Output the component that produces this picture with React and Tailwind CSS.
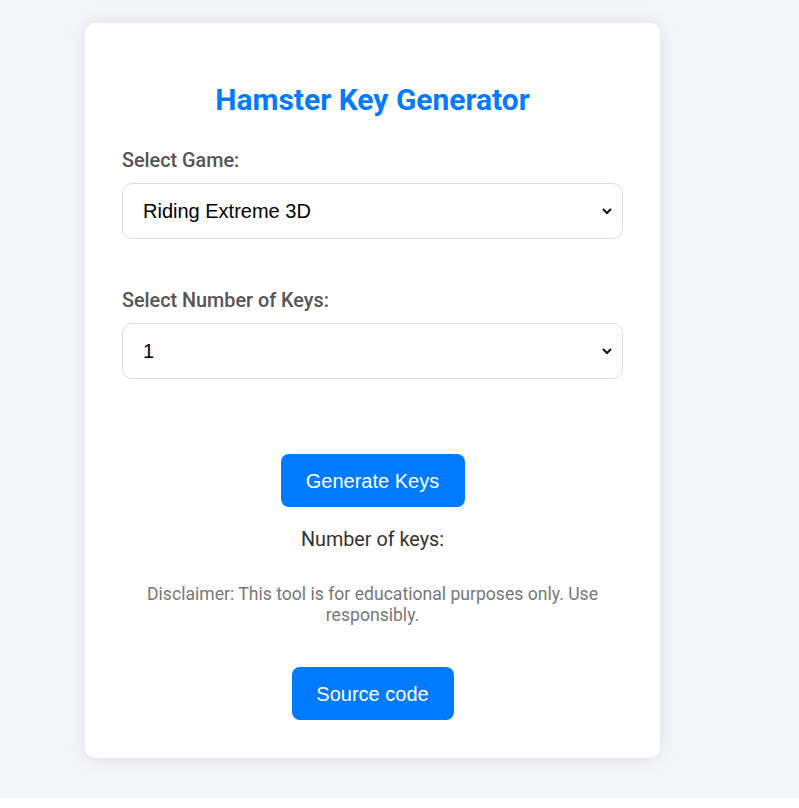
import { useState } from "react";

const games = ["Riding Extreme 3D", "Chain Cube 2048", "My Clone Army", "Train Miner", "Merge Away", "Twerk Race 3D"];
const counts = [1, 2, 3, 4];

const Chevron = () => (
  <svg
    className="pointer-events-none absolute top-1/2 right-[11px] -translate-y-1/2"
    width="10"
    height="7"
    viewBox="0 0 10 7"
    fill="none"
  >
    <path d="M1 1.5L5 5.5L9 1.5" stroke="#111" strokeWidth="2" />
  </svg>
);

const Select = ({ value, onChange, children }) => (
  <div className="relative mt-[11px]">
    <select
      value={value}
      onChange={onChange}
      className="block h-[56px] w-full appearance-none rounded-[10px] border border-[#ddd] bg-white pr-[30px] pl-[20px] font-['Liberation_Sans',Arial,sans-serif] text-[20px] text-black"
    >
      {children}
    </select>
    <Chevron />
  </div>
);

const App = () => {
  const [game, setGame] = useState(games[0]);
  const [count, setCount] = useState(1);

  return (
    <div className="bg-[#f4f6f9] pt-[23px] pb-[40px] pl-[85px] font-['Roboto',sans-serif]">
      <div className="w-[575px] rounded-[10px] bg-white px-[37px] pt-[60px] pb-[38px] shadow-[0_0_20px_rgba(0,0,0,0.1)]">
        <h1 className="text-center text-[30px] leading-[34px] font-bold text-[#007bff]">
          Hamster Key Generator
        </h1>

        <label className="mt-[33px] block text-[19.8px] leading-[22px] font-medium text-[#555]">
          Select Game:
        </label>
        <Select value={game} onChange={(e) => setGame(e.target.value)}>
          {games.map((g) => (
            <option key={g}>{g}</option>
          ))}
        </Select>

        <label className="mt-[51px] block text-[19.8px] leading-[22px] font-medium text-[#555]">
          Select Number of Keys:
        </label>
        <Select value={count} onChange={(e) => setCount(Number(e.target.value))}>
          {counts.map((c) => (
            <option key={c} value={c}>
              {c}
            </option>
          ))}
        </Select>

        <div className="mt-[75px] flex flex-col items-center">
          <button className="h-[53px] w-[184px] rounded-[8px] bg-[#007bff] font-['Liberation_Sans',Arial,sans-serif] text-[20px] text-white">
            Generate Keys
          </button>
          <p className="mt-[21px] text-[19.8px] leading-[24px] text-[#333]">Number of keys:</p>
          <p className="mt-[32px] text-center text-[17.6px] leading-[21px] text-[#777]">
            Disclaimer: This tool is for educational purposes only. Use responsibly.
          </p>
          <button className="mt-[41px] h-[53px] w-[162px] rounded-[8px] bg-[#007bff] font-['Liberation_Sans',Arial,sans-serif] text-[20px] text-white">
            Source code
          </button>
        </div>
      </div>
    </div>
  );
};

export default App;
